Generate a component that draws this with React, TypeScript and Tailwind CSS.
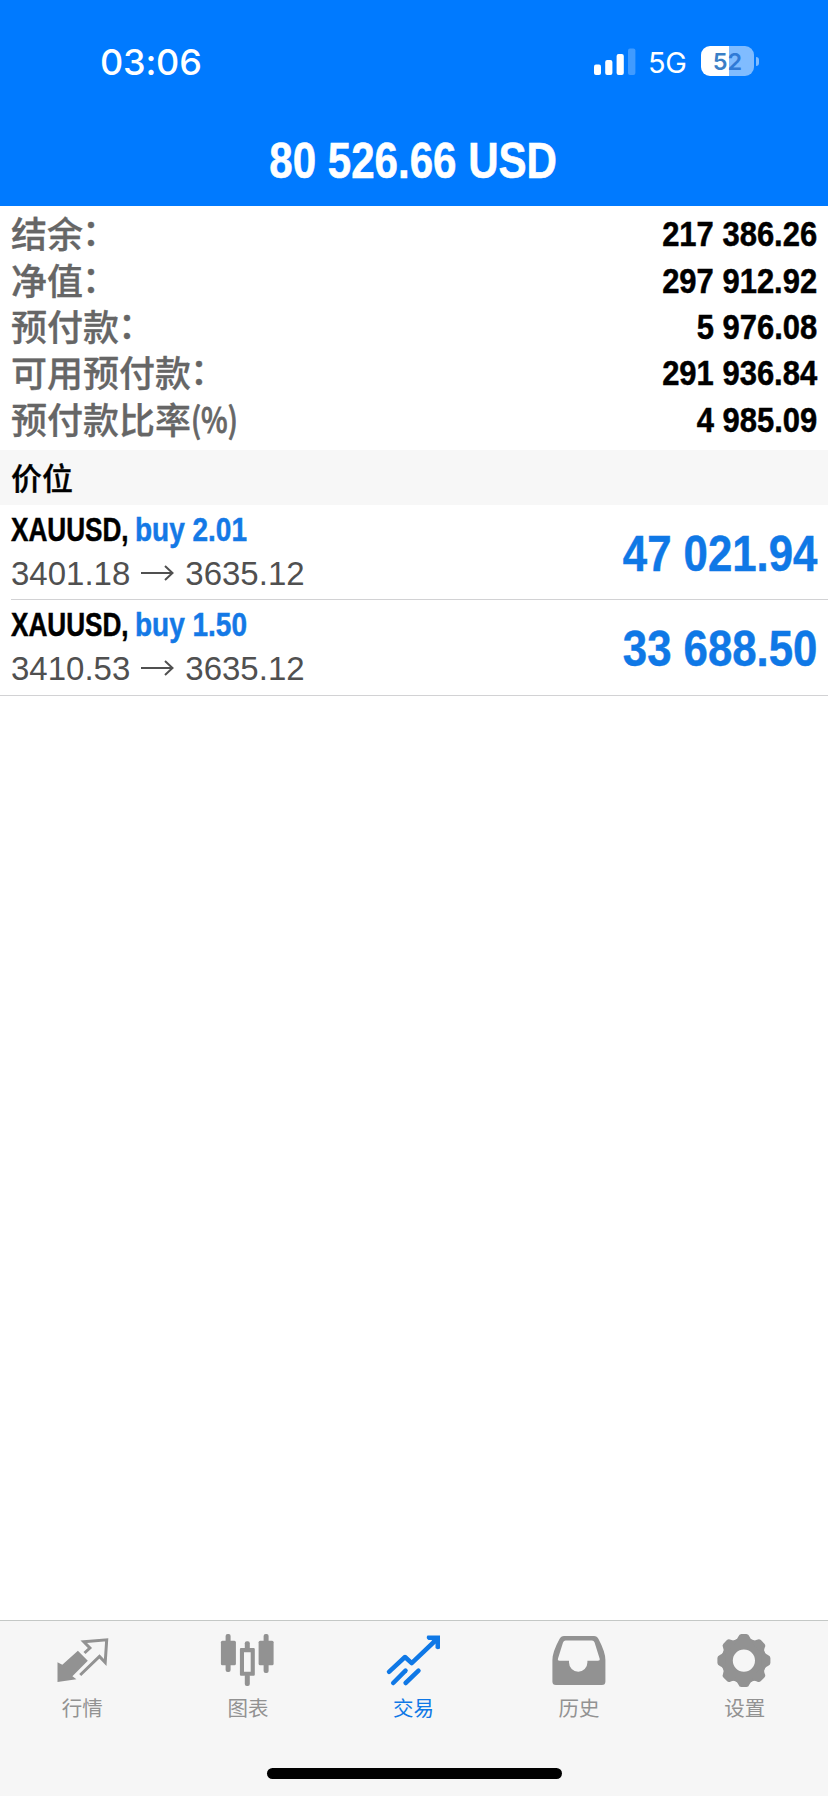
import type { ReactNode } from "react";

const summary = [
    { label: "结余", suffix: "：", value: "217 386.26" },
    { label: "净值", suffix: "：", value: "297 912.92" },
    { label: "预付款", suffix: "：", value: "5 976.08" },
    { label: "可用预付款", suffix: "：", value: "291 936.84" },
    { label: "预付款比率", suffix: "(%)", value: "4 985.09" },
];

const positions = [
    { symbol: "XAUUSD,", side: "buy 2.01", open: "3401.18", current: "3635.12", profit: "47 021.94" },
    { symbol: "XAUUSD,", side: "buy 1.50", open: "3410.53", current: "3635.12", profit: "33 688.50" },
];

const StatusBar = () => {
    return <div className="flex h-[124px] items-start justify-between pl-[100px] pr-[69px] pt-[46px] font-['Inter',sans-serif] text-white">
        <span className="text-[36px] leading-[33px] font-medium tracking-[-0.2px]">03:06</span>
        <div className="flex h-[30px] items-center">
            <svg width="42" height="30" viewBox="0 0 42 30" fill="white">
                <rect x="0" y="18.5" width="7" height="10.5" rx="2" />
                <rect x="11.2" y="14" width="7.2" height="15" rx="2" />
                <rect x="22.6" y="8" width="7.2" height="21" rx="2" />
                <rect x="34" y="2.5" width="7.4" height="26.5" rx="2" opacity="0.25" />
            </svg>
            <span className="ml-[12px] w-[40px] pt-[4px] text-[29px] leading-[28px] tracking-[-0.3px]">5G</span>
            <div className="ml-[13px] flex h-[30px] w-[53px] items-center justify-center rounded-[9px] bg-linear-to-r from-white from-52% to-[#80bcff] to-52% pt-px text-[23.5px] leading-none font-semibold">
                <span className="text-[#3a7fc6]">5</span>
                <span className="text-[#2f7ad6]">2</span>
            </div>
            <div className="ml-[2px] h-[9px] w-[3px] rounded-r-full bg-[#80bcff]" />
        </div>
    </div>
}

const QuotesIcon = () => (
    <svg width="60" height="60" viewBox="0 0 60 60" fill="none">
        <path d="M4.5 32.3L9.3 34.7L24.9 20.7L34.8 30.7L19.4 46.3L23.4 49.3L4.5 52Z" fill="currentColor" />
        <path d="M31.5 23L36.9 18L30.8 11.8L53.7 9.8L52.2 32.5L46.5 26.5L27.2 45" stroke="currentColor" strokeWidth="3" />
    </svg>
)

const ChartIcon = () => (
    <svg width="60" height="60" viewBox="0 0 60 60" fill="currentColor">
        <rect x="2.9" y="10.7" width="15" height="24.5" rx="1.5" />
        <rect x="7.6" y="4" width="5" height="38" rx="2" />
        <rect x="26.8" y="11.3" width="5" height="9" rx="2" />
        <rect x="26.8" y="44" width="5" height="12" rx="2" />
        <path fillRule="evenodd" d="M23 18H35.7Q36.8 18 36.8 19.2V44.5Q36.8 45.7 35.7 45.7H23Q21.9 45.7 21.9 44.5V19.2Q21.9 18 23 18ZM26 22.3V41.7H32.7V22.3Z" />
        <rect x="40.6" y="10.7" width="15" height="24.5" rx="1.5" />
        <rect x="45.6" y="4" width="5" height="39" rx="2" />
    </svg>
)

const TradeIcon = () => (
    <svg width="60" height="60" viewBox="0 0 60 60" fill="none" stroke="currentColor" strokeWidth="4.5" strokeLinecap="round" strokeLinejoin="round">
        <path d="M5 41.8L21 27L27.7 33.2L52 10" />
        <path d="M9.2 53L21.5 40.7" />
        <path d="M21.6 53L34.5 40.7" />
        <path d="M43.5 5.5H56V18.5Q53 20 51.5 18V13.5L47.5 10H44.5Q41.5 8 43.5 5.5Z" fill="currentColor" stroke="none" />
    </svg>
)

const HistoryIcon = () => (
    <svg width="60" height="60" viewBox="0 0 60 60" fill="currentColor">
        <path fillRule="evenodd" d="M14 6H44Q47 6 48.5 9Q55.4 22 55.4 30V51.5Q55.4 55 51.9 55H5.9Q2.4 55 2.4 51.5V30Q2.4 22 9.5 9Q11 6 14 6ZM15.5 10.6Q13.8 10.6 13 12.5L8 28.5Q7.4 30.7 9.5 30.7H19V32.5A9.2 9.2 0 0 0 37.4 32.5V30.7H48Q50.2 30.7 49.6 28.5L44.6 12.5Q43.8 10.6 42 10.6Z" />
    </svg>
)

const SettingsIcon = () => (
    <svg width="60" height="60" viewBox="0 0 60 60">
        <g transform="translate(28.9 30.6)" fill="currentColor">
            <circle r="16.8" fill="none" stroke="currentColor" strokeWidth="11.4" />
            {[0, 45, 90, 135, 180, 225, 270, 315].map((angle) => (
                <path key={angle} transform={`rotate(${angle})`} d="M-8.5 -20.5Q-6.5 -21.5 -5.5 -24Q-4.7 -26.5 -2.5 -26.5H2.5Q4.7 -26.5 5.5 -24Q6.5 -21.5 8.5 -20.5L6 -18H-6Z" />
            ))}
        </g>
    </svg>
)

const Tab = ({ label, active, children }: { label: string; active?: boolean; children: ReactNode }) => (
    <div className={active ? "flex flex-1 flex-col items-center text-[#0f78e6]" : "flex flex-1 flex-col items-center text-[#929292]"}>
        {children}
        <span className="mt-[3px] pr-px text-[20.5px] leading-[29px]">{label}</span>
    </div>
)

const App = () => {
    return <div className="flex h-[1796px] w-[828px] flex-col overflow-hidden bg-white font-['Liberation_Sans','Noto_Sans_CJK_SC',sans-serif]">
        <header className="h-[206px] bg-[#007aff]">
            <StatusBar />
            <h1 className="scale-x-[0.833] pr-[2px] text-center text-[50.5px] leading-[74px] font-bold whitespace-nowrap text-white [-webkit-text-stroke:0.6px]">80 526.66 USD</h1>
        </header>

        <section className="h-[244px] px-[11px] pt-[5px]">
            {summary.map((row) => (
                <div key={row.label} className="flex h-[46.4px] items-center justify-between">
                    <div className="flex pt-[4px] text-[36px] leading-[46px] font-medium text-[#666] [-webkit-text-stroke:0.3px]">
                        <span>{row.label}</span>
                        {row.suffix === "：" ? (
                            <span className="-translate-x-px -translate-y-[2px]">{row.suffix}</span>
                        ) : (
                            <span className="origin-left scale-x-[0.81] font-['Noto_Sans_CJK_SC',sans-serif] text-[35px] leading-[38px] [-webkit-text-stroke:0.8px]">{row.suffix}</span>
                        )}
                    </div>
                    <span className="origin-right scale-x-[0.885] text-[35px] leading-[46px] font-bold [-webkit-text-stroke:0.5px]">{row.value}</span>
                </div>
            ))}
        </section>

        <h2 className="h-[55px] bg-[#f7f7f7] pl-[11px] font-['Noto_Sans_CJK_SC',sans-serif] text-[31px] leading-[54px] font-medium [-webkit-text-stroke:0.3px]">价位</h2>

        <section className="border-b border-[#d2d2d4]">
            {positions.map((p, i) => (
                <div key={p.profit} className={i === 0 ? "ml-[11px] flex h-[95px] justify-between border-b border-[#d2d2d4] pr-[11px]" : "ml-[11px] flex h-[95px] justify-between pr-[11px]"}>
                    <div className="pt-[3px]">
                        <div className="flex h-[44px] text-[33.5px] leading-[44px] font-bold whitespace-nowrap [-webkit-text-stroke:0.5px]">
                            <span className="w-[124px] origin-left scale-x-[0.78]">{p.symbol}</span>
                            <span className="origin-left scale-x-[0.835] text-[#1479e6]">{p.side}</span>
                        </div>
                        <div className="flex h-[44px] items-center text-[33px] leading-[44px] text-[#505050]">
                            <span>{p.open}</span>
                            <svg className="mx-[11px] mb-[2px]" width="33" height="20" viewBox="0 0 33 20" fill="none" stroke="currentColor" strokeWidth="2">
                                <path d="M0 10H31M24 3L31.5 10L24 17" />
                            </svg>
                            <span>{p.current}</span>
                        </div>
                    </div>
                    <span className="origin-right scale-x-[0.875] text-[50px] leading-[98px] font-bold text-[#0f78e6] [-webkit-text-stroke:0.5px]">{p.profit}</span>
                </div>
            ))}
        </section>

        <nav className="mt-auto h-[176px] border-t border-[#c4c8c6] bg-[#f6f6f6] pt-[9px] font-['Noto_Sans_CJK_SC',sans-serif]">
            <div className="flex">
                <Tab label="行情"><QuotesIcon /></Tab>
                <Tab label="图表"><ChartIcon /></Tab>
                <Tab label="交易" active><TradeIcon /></Tab>
                <Tab label="历史"><HistoryIcon /></Tab>
                <Tab label="设置"><SettingsIcon /></Tab>
            </div>
            <div className="mx-auto mt-[46px] h-[11px] w-[295px] rounded-full bg-black" />
        </nav>
    </div>
}
export default App;
